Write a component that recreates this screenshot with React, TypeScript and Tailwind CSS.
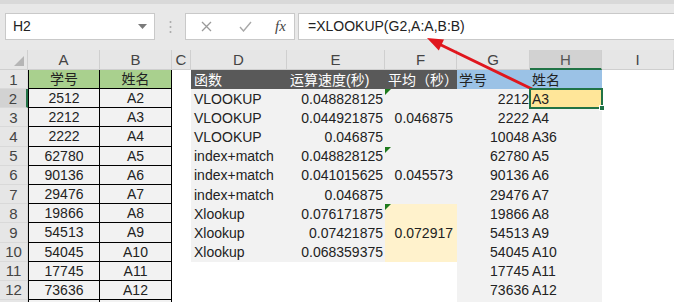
import type { ReactNode } from 'react'

const cols = 'grid grid-rows-1 grid-cols-[28px_72px_72px_19px_96px_98px_72px_73px_72px_72px]'
const font = { fontFamily: '"Liberation Sans", "Noto Sans CJK SC", sans-serif' }

type Row = [string, string, string, string, string, string, string]

const rows: Row[] = [
  ['2512', 'A2', 'VLOOKUP', '0.048828125', '', '2212', 'A3'],
  ['2212', 'A3', 'VLOOKUP', '0.044921875', '0.046875', '2222', 'A4'],
  ['2222', 'A4', 'VLOOKUP', '0.046875', '', '10048', 'A36'],
  ['62780', 'A5', 'index+match', '0.048828125', '', '62780', 'A5'],
  ['90136', 'A6', 'index+match', '0.041015625', '0.045573', '90136', 'A6'],
  ['29476', 'A7', 'index+match', '0.046875', '', '29476', 'A7'],
  ['19866', 'A8', 'Xlookup', '0.076171875', '', '19866', 'A8'],
  ['54513', 'A9', 'Xlookup', '0.07421875', '0.072917', '54513', 'A9'],
  ['54045', 'A10', 'Xlookup', '0.068359375', '', '54045', 'A10'],
  ['17745', 'A11', '', '', '', '17745', 'A11'],
  ['73636', 'A12', '', '', '', '73636', 'A12'],
]

function Cell({ children, className = '' }: { children?: ReactNode; className?: string }) {
  return <div className={`relative flex h-full min-h-0 items-center whitespace-nowrap leading-none ${className}`}>{children}</div>
}

function ErrorMark() {
  return <span className="absolute left-0 top-0 h-0 w-0 border-r-[6px] border-t-[6px] border-r-transparent border-t-[#1e7b1e]" />
}

function FormulaBar() {
  return (
    <div className="h-[50px] border-t-[4px] border-[#d9d9d9] bg-[#e8e8e8] pt-[9px]">
      <div className="flex h-[27px] items-stretch">
        <div className="ml-[5px] flex w-[150px] items-center justify-between border border-[#c9c9c9] bg-white pl-[7px] pr-[7px] text-[14px] text-[#222]">
          <span>H2</span>
          <svg width="9" height="5" viewBox="0 0 9 5">
            <path d="M0 0h9L4.5 5z" fill="#7a7a7a" />
          </svg>
        </div>
        <div className="flex w-[30px] items-center justify-center">
          <svg width="3" height="14" viewBox="0 0 3 14">
            <circle cx="1.5" cy="2" r="1" fill="#a8a8a8" />
            <circle cx="1.5" cy="7" r="1" fill="#a8a8a8" />
            <circle cx="1.5" cy="12" r="1" fill="#a8a8a8" />
          </svg>
        </div>
        <div className="flex w-[110px] items-center border border-[#c9c9c9] bg-white">
          <svg className="ml-[15px]" width="11" height="11" viewBox="0 0 11 11">
            <path d="M1 1l9 9M10 1l-9 9" stroke="#9a9a9a" strokeWidth="1.3" />
          </svg>
          <svg className="ml-[27px]" width="13" height="11" viewBox="0 0 13 11">
            <path d="M1 6l3.5 4L12 1" stroke="#a8a8a8" strokeWidth="1.4" fill="none" />
          </svg>
          <span className="ml-[23px] text-[15px] italic text-[#444]" style={{ fontFamily: '"Liberation Serif", serif' }}>
            fx
          </span>
        </div>
        <div className="ml-[3px] flex flex-1 items-center border border-r-0 border-[#c9c9c9] bg-white pl-[9px] text-[14px] text-[#222]">
          =XLOOKUP(G2,A:A,B:B)
        </div>
      </div>
    </div>
  )
}

function ColumnHeaders() {
  const letters = ['A', 'B', 'C', 'D', 'E', 'F', 'G', 'H', 'I']
  return (
    <div className={`${cols} h-[20px] bg-[#e6e6e6] text-[15px] leading-none text-[#444]`}>
      <div className="relative border-b border-r border-[#cfcfcf]">
        <span className="absolute bottom-[3px] right-[3px] h-0 w-0 border-b-[10px] border-l-[10px] border-b-[#b5b5b5] border-l-transparent" />
      </div>
      {letters.map((l) =>
        l === 'H' ? (
          <div key={l} className="flex items-center justify-center border-b-2 border-r border-b-[#217346] border-r-[#cfcfcf] bg-[#d2d2d2] text-[#555]">
            {l}
          </div>
        ) : (
          <div key={l} className="flex items-center justify-center border-b border-r border-[#cfcfcf]">
            {l}
          </div>
        ),
      )}
    </div>
  )
}

function RowHead({ n }: { n?: number }) {
  const selected = n === 2
  return (
    <div
      className={`flex h-full min-h-0 items-center justify-center border-b text-[15px] leading-none text-[#444] ${
        selected ? 'border-r-2 border-b-[#d9d9d9] border-r-[#217346] bg-[#d2d2d2]' : 'border-r border-[#d9d9d9] bg-[#e6e6e6]'
      }`}
    >
      {n}
    </div>
  )
}

export default function App() {
  return (
    <div className="relative h-[302px] w-[674px] overflow-hidden bg-white" style={font}>
      <FormulaBar />
      <ColumnHeaders />
      <div className="text-[14px] text-[#222]">
        <div className={`${cols} h-[19px]`}>
          <RowHead n={1} />
          <Cell className="justify-center border-b border-l border-r border-black bg-[#a9d08e]">学号</Cell>
          <Cell className="justify-center border-b border-r border-black bg-[#a9d08e]">姓名</Cell>
          <Cell />
          <Cell className="bg-[#595959] pl-[3px] text-white">函数</Cell>
          <Cell className="bg-[#595959] pl-[3px] text-white">运算速度(秒)</Cell>
          <Cell className="bg-[#595959] pl-[3px] text-white">平均（秒）</Cell>
          <Cell className="bg-[#9bc2e6] pl-[2px]">学号</Cell>
          <Cell className="bg-[#9bc2e6] pl-[2px]">姓名</Cell>
          <Cell />
        </div>
        {rows.map((r, i) => {
          const n = i + 2
          const inTable = n <= 10
          const yellowF = n >= 8 && n <= 10
          return (
            <div key={n} className={`${cols} h-[19.2px]`}>
              <RowHead n={n} />
              <Cell className="justify-center border-b border-l border-r border-black bg-[#f2f2f2]">{r[0]}</Cell>
              <Cell className="justify-center border-b border-r border-black bg-[#f2f2f2]">{r[1]}</Cell>
              <Cell />
              <Cell className={`pl-[3px] ${inTable ? 'bg-[#f2f2f2]' : ''}`}>{r[2]}</Cell>
              <Cell className={`justify-end pr-[2px] ${inTable ? 'bg-[#f2f2f2]' : ''}`}>{r[3]}</Cell>
              <Cell className={`justify-end pr-[4px] ${yellowF ? 'bg-[#fff2cc]' : inTable ? 'bg-[#f2f2f2]' : ''}`}>
                {(n === 2 || n === 5 || n === 8) && <ErrorMark />}
                {r[4]}
              </Cell>
              <Cell className="justify-end bg-[#f2f2f2] pr-[1px]">{r[5]}</Cell>
              <Cell className={`pl-[2px] ${n === 2 ? 'z-10 bg-[#ffe699]' : 'bg-[#f2f2f2]'}`}>
                {n === 2 && (
                  <span className="absolute -bottom-px -left-px -right-px -top-px border-2 border-[#217346]">
                    <span className="absolute -bottom-[4px] -right-[4px] h-[6px] w-[6px] border border-white bg-[#217346]" />
                  </span>
                )}
                <span className="relative">{r[6]}</span>
              </Cell>
              <Cell />
            </div>
          )
        })}
        <div className={`${cols} h-[19px]`}>
          <RowHead />
          <Cell className="border-l border-r border-black bg-[#f2f2f2]" />
          <Cell className="border-r border-black bg-[#f2f2f2]" />
          <Cell />
          <Cell />
          <Cell />
          <Cell />
          <Cell className="bg-[#f2f2f2]" />
          <Cell className="bg-[#f2f2f2]" />
          <Cell />
        </div>
      </div>
      <svg className="pointer-events-none absolute left-0 top-0" width="674" height="302" viewBox="0 0 674 302">
        <line x1="532" y1="89" x2="440" y2="44.5" stroke="#e0161d" strokeWidth="3" strokeLinecap="round" />
        <polygon points="427,38 438.8,50.4 444,39.6" fill="#e0161d" />
      </svg>
    </div>
  )
}
